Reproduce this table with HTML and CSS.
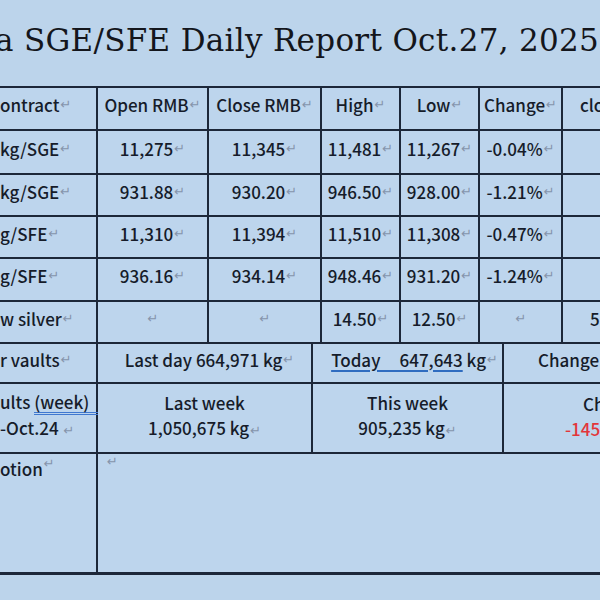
FILE: index.html
```html
<!DOCTYPE html>
<html>
<head>
<meta charset="utf-8">
<link rel="stylesheet" href="styles.css">
</head>
<body>
<div class="page">
  <div class="title">a SGE/SFE Daily Report Oct.27, 2025</div>

  <div class="grid ga">
    <div class="c lft">ontract<span class="pm">↵</span></div>
    <div class="c">Open RMB<span class="pm">↵</span></div>
    <div class="c">Close RMB<span class="pm">↵</span></div>
    <div class="c">High<span class="pm">↵</span></div>
    <div class="c">Low<span class="pm">↵</span></div>
    <div class="c">Change<span class="pm">↵</span></div>
    <div class="c rt p17">close</div>

    <div class="c lft">kg/SGE<span class="pm">↵</span></div>
    <div class="c">11,275<span class="pm">↵</span></div>
    <div class="c">11,345<span class="pm">↵</span></div>
    <div class="c">11,481<span class="pm">↵</span></div>
    <div class="c">11,267<span class="pm">↵</span></div>
    <div class="c">-0.04%<span class="pm">↵</span></div>
    <div class="c rt"></div>

    <div class="c lft">kg/SGE<span class="pm">↵</span></div>
    <div class="c">931.88<span class="pm">↵</span></div>
    <div class="c">930.20<span class="pm">↵</span></div>
    <div class="c">946.50<span class="pm">↵</span></div>
    <div class="c">928.00<span class="pm">↵</span></div>
    <div class="c">-1.21%<span class="pm">↵</span></div>
    <div class="c rt"></div>

    <div class="c lft">g/SFE<span class="pm">↵</span></div>
    <div class="c">11,310<span class="pm">↵</span></div>
    <div class="c">11,394<span class="pm">↵</span></div>
    <div class="c">11,510<span class="pm">↵</span></div>
    <div class="c">11,308<span class="pm">↵</span></div>
    <div class="c">-0.47%<span class="pm">↵</span></div>
    <div class="c rt"></div>

    <div class="c lft">g/SFE<span class="pm">↵</span></div>
    <div class="c">936.16<span class="pm">↵</span></div>
    <div class="c">934.14<span class="pm">↵</span></div>
    <div class="c">948.46<span class="pm">↵</span></div>
    <div class="c">931.20<span class="pm">↵</span></div>
    <div class="c">-1.24%<span class="pm">↵</span></div>
    <div class="c rt"></div>

    <div class="c lft">w silver<span class="pm">↵</span></div>
    <div class="c"><span class="pm">↵</span></div>
    <div class="c"><span class="pm">↵</span></div>
    <div class="c">14.50<span class="pm">↵</span></div>
    <div class="c">12.50<span class="pm">↵</span></div>
    <div class="c"><span class="pm">↵</span></div>
    <div class="c rt p27">5</div>
  </div>

  <div class="grid gb">
    <div class="c lft">r vaults <span class="pm">↵</span></div>
    <div class="c p6l">Last day 664,971 kg<span class="pm">↵</span></div>
    <div class="c p12l"><span class="ul">Today&nbsp;&nbsp;&nbsp;&nbsp;&nbsp;647,643</span>&nbsp;kg<span class="pm">↵</span></div>
    <div class="c rt p34">Change</div>

    <div class="c lft col">
      <div>ults <span class="dul">(week)</span></div>
      <div>-Oct.24 <span class="pm">↵</span></div>
    </div>
    <div class="c col">
      <div>Last week</div>
      <div>1,050,675 kg<span class="pm">↵</span></div>
    </div>
    <div class="c col">
      <div>This week</div>
      <div>905,235 kg<span class="pm">↵</span></div>
    </div>
    <div class="c rt col">
      <div class="p79">Change</div>
      <div class="p61 red">-145,440 kg</div>
    </div>
  </div>

  <div class="grid gc">
    <div class="c lft top">otion<span class="pm">↵</span></div>
    <div class="c lft top pad8"><span class="pm">↵</span></div>
  </div>
</div>
</body>
</html>
```

FILE: styles.css
```css
html, body {
  margin: 0;
  padding: 0;
  background: #bcd4eb;
}
.page {
  width: 600px;
  height: 600px;
  overflow: hidden;
  background: #bcd4eb;
}
.title {
  height: 86px;
  box-sizing: border-box;
  padding-top: 22px;
  margin-left: -5px;
  white-space: nowrap;
  font-family: "DejaVu Serif", "Liberation Serif", serif;
  font-size: 31px;
  color: #14161c;
  letter-spacing: 0.3px;
  word-spacing: 0;
}
.grid {
  display: grid;
  width: 660px;
  background: #1c2739;
  gap: 2px;
}
.ga {
  grid-template-columns: 96px 109px 111px 77px 77px 81px 1fr;
  grid-template-rows: 41px 42px 40px 40px 41px 40px;
  padding: 2px 0;
}
.gb {
  grid-template-columns: 96px 213px 189px 1fr;
  grid-template-rows: 38px 68px;
  padding: 0 0 2px 0;
}
.gc {
  grid-template-columns: 96px 1fr;
  grid-template-rows: 118px;
  padding: 0 0 3px 0;
  background: #1c2739;
}
.c {
  background: #bdd5ed;
  display: flex;
  align-items: center;
  justify-content: center;
  white-space: nowrap;
  font-family: "Noto Sans CJK SC", "Noto Sans", sans-serif;
  font-weight: 500;
  font-size: 17px;
  color: #161c2a;
  padding-bottom: 8px;
  box-sizing: border-box;
}
.lft { justify-content: flex-start; }
.rt { justify-content: flex-start; }
.col {
  flex-direction: column;
  justify-content: center;
  line-height: 25px;
  padding-bottom: 4px;
}
.lft.col { align-items: flex-start; }
.rt.col { align-items: flex-start; }
.top { align-items: flex-start; padding-top: 2px; }
.pad8 { padding-left: 8px; padding-top: 0; }
.p6l { padding-left: 10px; }
.p12l { padding-left: 14px; }
.p17 { padding-left: 17px; }
.p27 { padding-left: 27px; }
.p34 { padding-left: 34px; }
.p79 { padding-left: 79px; }
.p61 { padding-left: 61px; }
.red { color: #e3353a; }
.pm {
  font-family: "DejaVu Sans", sans-serif;
  font-weight: 400;
  font-size: 13px;
  color: #8594ab;
  margin-left: 1px;
}
.ul {
  text-decoration: underline;
  text-decoration-color: #2f6cc0;
  text-decoration-thickness: 2px;
  text-underline-offset: 3px;
}
.dul {
  display: inline-block;
  padding-right: 30px;
  border-bottom: 3px double #3f78d0;
  line-height: 20px;
}
```
